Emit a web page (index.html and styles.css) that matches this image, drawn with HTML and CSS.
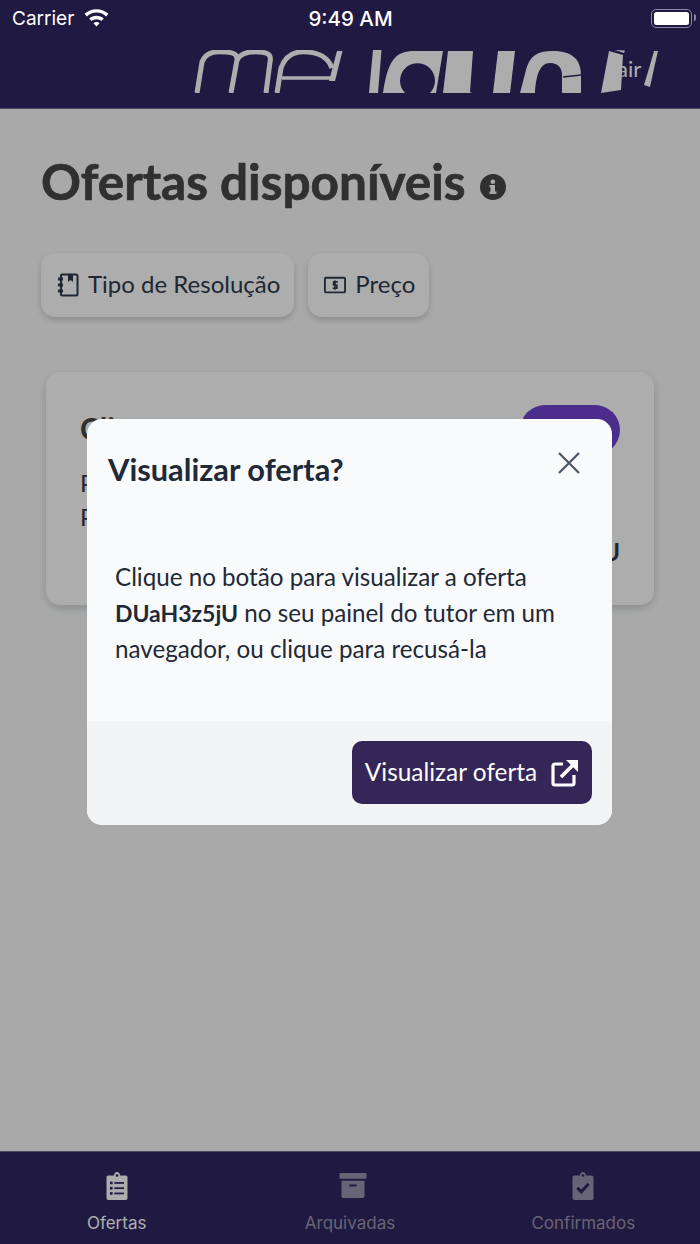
FILE: index.html
```html
<!DOCTYPE html>
<html lang="pt-BR">
<head>
<meta charset="utf-8">
<title>Ofertas disponíveis</title>
<link rel="stylesheet" href="styles.css">
</head>
<body>
<div class="app">
  <header class="top">
    <div class="status">
      <div class="status-left">
        <span>Carrier</span>
        <svg class="wifi" viewBox="0 0 26 20" width="27" height="21"><path d="M13 1C8.500 1 4.500 2.700 1.500 5.500L3.800 8C6.200 5.700 9.400 4.300 13 4.300S19.800 5.700 22.200 8L24.500 5.500C21.500 2.700 17.500 1 13 1Z" fill="#fff"/><path d="M13 7.300C10.300 7.300 7.900 8.300 6 10L8.300 12.500C9.600 11.400 11.200 10.700 13 10.700S16.400 11.400 17.700 12.500L20 10C18.100 8.300 15.700 7.300 13 7.300Z" fill="#fff"/><path d="M13 13.400C11.900 13.400 10.900 13.800 10.100 14.500L13 17.800L15.900 14.500C15.100 13.800 14.100 13.400 13 13.400Z" fill="#fff"/></svg>
      </div>
      <span class="clock">9:49 AM</span>
      <div class="battery-wrap"><div class="battery"><span class="battery-level"></span></div></div>
    </div>
    <div class="brand">
      <svg class="logo" viewBox="190 50 470 43" width="470" height="43">
        <g fill="none" stroke="#fff" stroke-width="5">
          <path d="M197 93L202 62C205 54 211 51.800 219 51.800C231 51.800 238 53 237 60L231 93"/>
          <path d="M237 60C240 54 247 51.800 255 51.800C267 51.800 272 54 270 62L266 93"/>
          <path d="M277 93L281 68C285 57 292 51.800 303 51.800C316 51.800 327 55 332 68"/>
          <path d="M282 78L331 78" stroke-width="3.500"/>
        </g>
        <g fill="#fff">
          <path d="M342.500 51L335 81H329L337 51Z"/>
          <path d="M373 50H381.500L378 93H369Z"/>
          <path fill-rule="evenodd" d="M383 93C388 60 395 51 415 51H443L436 93ZM405 93A17.500 17.500 0 1 1 430 93Z"/>
          <path d="M448 51H473L470 92L472 93H443Z"/>
          <path d="M498 51H515L510 93H493Z"/>
          <path d="M520 93L526 70C530 55 538 51 553 51C573 51 581 60 581 75V93H562V78C563 68 558 63 550 63C540 63 536 75 535 93Z"/>
          <path d="M609 51L623 55L621 90L601 93Z"/>
          <path d="M615 50L625 50.500L624 53Z"/>
          <path d="M654 51H658L655 64L650 87L644 85L650 65Z"/>
        </g>
        <path d="M563 77L581 75" stroke="#302660" stroke-width="1.300"/>
      </svg>
      <span class="air">air</span>
    </div>
  </header>

  <main class="content">
    <div class="heading">
      <h1>Ofertas disponíveis</h1>
      <svg class="info" viewBox="0 0 26 26" width="26" height="26"><circle cx="13" cy="13" r="13" fill="#474747"/><rect x="10.500" y="11" width="4.500" height="7.500" fill="#f9fafb"/><rect x="9.500" y="17.500" width="7" height="2.500" fill="#f9fafb"/><rect x="9.500" y="11" width="5" height="2.200" fill="#f9fafb"/><circle cx="12.800" cy="7.800" r="2.300" fill="#f9fafb"/></svg>
    </div>
    <div class="filters">
      <button class="chip"><svg viewBox="0 0 22 24" width="22" height="24"><path d="M4 2.500Q4 1.500 5 1.500H19Q20.500 1.500 20.500 3V21Q20.500 22.500 19 22.500H5Q4 22.500 4 21.500Z" fill="none" stroke="#2e3a4c" stroke-width="2"/><path d="M11 2H16V9L13.500 7L11 9Z" fill="#2e3a4c"/><path d="M1 6H6M1 12H6M1 18H6" stroke="#2e3a4c" stroke-width="3"/></svg><span class="chip-label">Tipo de Resolução</span></button>
      <button class="chip"><svg viewBox="0 0 24 20" width="22" height="19"><rect x="1" y="1.500" width="22" height="16" rx="1" fill="none" stroke="#2e3a4c" stroke-width="2"/><path d="M15 6H10.500V9.500H14V13H9.500M12 4.500V14.500" fill="none" stroke="#2e3a4c" stroke-width="1.800"/></svg><span class="chip-label">Preço</span></button>
    </div>
    <article class="card">
      <div class="card-head">
        <h2>Cliente</h2>
        <span class="pill"></span>
      </div>
      <p>Prazo</p>
      <p>Preço</p>
      <div class="code">DUaH3z5jU</div>
    </article>
  </main>

  <nav class="tabs">
    <div class="tab tab-on">
      <span class="tab-icon"><svg viewBox="0 0 24 32" width="22" height="28"><path d="M2 4H8.500Q9 0 12 0T15.500 4H22Q24 4 24 6V30Q24 32 22 32H2Q0 32 0 30V6Q0 4 2 4Z" fill="#fff"/><g fill="#302660"><circle cx="12" cy="4" r="1.500"/><rect x="4" y="11" width="3" height="3"/><rect x="4" y="17" width="3" height="3"/><rect x="4" y="23" width="3" height="3"/><rect x="9" y="11.500" width="11" height="2"/><rect x="9" y="17.500" width="11" height="2"/><rect x="9" y="23.500" width="11" height="2"/></g></svg></span>
      <span>Ofertas</span>
    </div>
    <div class="tab tab-off">
      <span class="tab-icon tab-icon-box"><svg viewBox="0 0 28 26" width="28" height="25"><rect x="0" y="0" width="28" height="6" rx="1" fill="#9a94b0"/><path d="M2 8H26V24Q26 26 24 26H4Q2 26 2 24Z" fill="#9a94b0"/><rect x="10" y="12" width="8" height="2" rx="1" fill="#302660"/></svg></span>
      <span>Arquivadas</span>
    </div>
    <div class="tab tab-off">
      <span class="tab-icon"><svg viewBox="0 0 24 32" width="22" height="28"><path d="M2 4H8.500Q9 0 12 0T15.500 4H22Q24 4 24 6V30Q24 32 22 32H2Q0 32 0 30V6Q0 4 2 4Z" fill="#9a94b0"/><circle cx="12" cy="4" r="1.500" fill="#302660"/><path d="M5.500 18L10 22.500L18.500 13.500" fill="none" stroke="#302660" stroke-width="3.500"/></svg></span>
      <span>Confirmados</span>
    </div>
  </nav>

  <div class="overlay">
    <section class="modal">
      <div class="modal-main">
        <div class="modal-title">
          <h3>Visualizar oferta?</h3>
          <svg class="close" viewBox="0 0 24 24" width="24" height="24"><path d="M2 2L22 22M22 2L2 22" fill="none" stroke="#4b5563" stroke-width="2.200"/></svg>
        </div>
        <p class="modal-text">Clique no botão para visualizar a oferta <b class="offer-code">DUaH3z5jU</b> no seu painel do tutor em um navegador, ou clique para recusá-la</p>
      </div>
      <div class="modal-foot">
        <button class="primary"><span class="primary-label">Visualizar oferta</span><svg viewBox="0 0 28 28" width="28" height="28"><path d="M12 5H4Q2 5 2 7V24Q2 26 4 26H21Q23 26 23 24V16" fill="none" stroke="#fff" stroke-width="3.200"/><path d="M10 18L24 4" stroke="#fff" stroke-width="3.600"/><path d="M15 1H27V13Z" fill="#fff"/></svg></button>
      </div>
    </section>
  </div>
</div>
</body>
</html>
```

FILE: styles.css
```css
* { box-sizing: border-box; }
html, body { margin: 0; height: 100%; }
body { font-family: Lato, "Noto Sans", sans-serif; color: #2e3a4c; background: #f9fafb; }
h1, h2, h3, p { margin: 0; }
.app { position: relative; width: 700px; height: 1244px; display: flex; flex-direction: column; overflow: hidden; }

.top { height: 109px; background: #302660; border-bottom: 1px solid #6f6a8a; flex: none; }
.status { position: relative; z-index: 3; height: 36px; padding: 0 8px 0 12px; display: grid; grid-template-columns: 1fr auto 1fr; align-items: center; color: #fff; font-family: Inter, Roboto, sans-serif; font-size: 19px; }
.status-left { display: flex; align-items: center; gap: 9px; }
.clock { font-weight: 500; font-size: 20.500px; margin-left: -3px; }
.battery-wrap { display: flex; justify-content: flex-end; }
.battery { position: relative; width: 41px; height: 19px; border: 1.500px solid #8a86a0; border-radius: 5px; padding: 2px; display: flex; }
.battery::after { content: ""; position: absolute; right: -4.500px; top: 4.500px; width: 2px; height: 7px; border-radius: 0 2px 2px 0; background: #8a86a0; }
.battery-level { display: block; width: 100%; background: #fff; border-radius: 2.500px; }
.brand { position: relative; height: 57px; padding: 14px 0 0 190px; }
.logo { display: block; }
.air { position: absolute; left: 617px; top: 19px; color: #fff; font-size: 22px; line-height: 28px; }

.content { flex: 1; padding: 46px 46px 0 41px; background: #f9fafb; }
.heading { display: flex; align-items: flex-start; gap: 14px; height: 56px; }
h1 { font-size: 49.500px; font-weight: 700; -webkit-text-stroke: .7px #474747; color: #474747; line-height: 52px; white-space: nowrap; }
.info { margin-top: 19px; }
.filters { display: flex; gap: 14px; margin-top: 42px; }
.chip { height: 64px; padding: 0 14px 0 16px; display: flex; align-items: center; gap: 9px; border: 0; border-radius: 14px; background: #fff; font: inherit; font-size: 24px; color: #2e3a4c; box-shadow: 0 3px 6px rgba(0, 0, 0, .18); }
.chip-label { padding-bottom: 3px; }
.card { position: relative; margin: 55px 0 0 5px; height: 233px; padding: 33px 34px; border-radius: 14px; background: #fff; box-shadow: 0 3px 8px rgba(0, 0, 0, .18); }
.card-head { display: flex; justify-content: space-between; align-items: flex-start; height: 61px; }
.card h2 { font-size: 30px; color: #474747; margin-top: 5px; }
.pill { flex: none; width: 100px; height: 50px; border-radius: 25px; background: #6f45ce; }
.card p { font-size: 24px; line-height: 34px; }
.code { text-align: right; font-size: 24px; line-height: 36px; font-weight: 700; }

.tabs { height: 93px; flex: none; background: #302660; display: grid; grid-template-columns: repeat(3, 1fr); padding-top: 20px; border-top: 1px solid #6f6a8a; font-family: Inter, Roboto, sans-serif; font-size: 17px; line-height: 20px; }
.tab { display: flex; flex-direction: column; align-items: center; }
.tab-icon { display: flex; height: 30px; margin-bottom: 11px; }
.tab-icon-box { margin-left: 6px; padding-top: 1px; }
.tab-on { color: #fff; }
.tab-off { color: #9a94b0; }

.overlay { position: absolute; inset: 0; z-index: 2; background: rgba(0, 0, 0, .32); padding: 419px 88px 0 87px; }
.modal { height: 406px; border-radius: 15px; overflow: hidden; display: flex; flex-direction: column; background: #f9fafb; }
.modal-main { flex: 1; padding: 29px 31px 0 21px; }
.modal-title { display: flex; justify-content: space-between; align-items: flex-start; }
.modal-title h3 { font-size: 30.800px; line-height: 42px; margin-top: 1px; color: #1f2937; }
.close { margin-top: 3px; }
.modal-text { margin: 68px 0 0 7px; font-size: 24.200px; line-height: 35.500px; width: 470px; color: #1f2937; }
.offer-code { font-size: 23px; }
.modal-foot { height: 104px; background: #f3f4f6; padding: 20px; display: flex; justify-content: flex-end; }
.primary { width: 240px; height: 63px; border: 0; border-radius: 10px; background: #352658; color: #fff; font: inherit; font-size: 24.400px; display: flex; align-items: center; justify-content: center; gap: 14px; }
.primary-label { padding-bottom: 2px; }
```
